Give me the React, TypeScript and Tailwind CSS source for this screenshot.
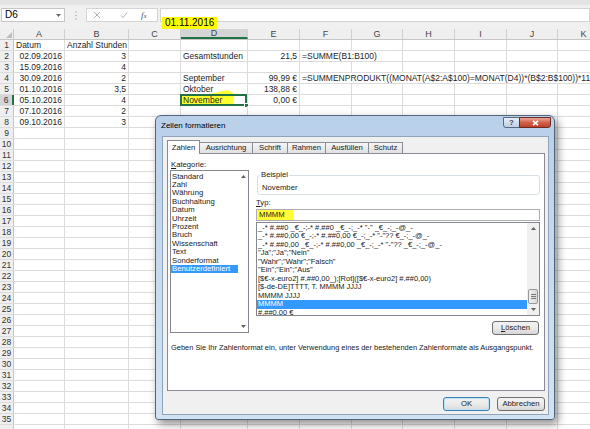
import React from "react";

type Col = { id: string; w: string };
type Val = { text: string; align: "l" | "r"; spill?: boolean };

const COLS: Col[] = [
  { id: "A", w: "w-[51px]" },
  { id: "B", w: "w-[64px]" },
  { id: "C", w: "w-[52px]" },
  { id: "D", w: "w-[67px]" },
  { id: "E", w: "w-[52px]" },
  { id: "F", w: "w-[52px]" },
  { id: "G", w: "w-[51px]" },
  { id: "H", w: "w-[52px]" },
  { id: "I", w: "w-[52px]" },
  { id: "J", w: "w-[51px]" },
  { id: "K", w: "w-[52px]" },
];

const CELLS: Record<string, Val> = {
  A1: { text: "Datum", align: "l" },
  B1: { text: "Anzahl Stunden", align: "l" },
  A2: { text: "02.09.2016", align: "r" },
  B2: { text: "3", align: "r" },
  D2: { text: "Gesamtstunden", align: "l" },
  E2: { text: "21,5", align: "r" },
  F2: { text: "=SUMME(B1:B100)", align: "l", spill: true },
  A3: { text: "15.09.2016", align: "r" },
  B3: { text: "4", align: "r" },
  A4: { text: "30.09.2016", align: "r" },
  B4: { text: "2", align: "r" },
  D4: { text: "September", align: "l" },
  E4: { text: "99,99 €", align: "r" },
  F4: {
    text: "=SUMMENPRODUKT((MONAT(A$2:A$100)=MONAT(D4))*(B$2:B$100))*11,11",
    align: "l",
    spill: true,
  },
  A5: { text: "01.10.2016", align: "r" },
  B5: { text: "3,5", align: "r" },
  D5: { text: "Oktober", align: "l" },
  E5: { text: "138,88 €", align: "r" },
  A6: { text: "05.10.2016", align: "r" },
  B6: { text: "4", align: "r" },
  D6: { text: "November", align: "l" },
  E6: { text: "0,00 €", align: "r" },
  A7: { text: "07.10.2016", align: "r" },
  B7: { text: "2", align: "r" },
  A8: { text: "09.10.2016", align: "r" },
  B8: { text: "3", align: "r" },
};

const CATEGORIES = [
  "Standard",
  "Zahl",
  "Währung",
  "Buchhaltung",
  "Datum",
  "Uhrzeit",
  "Prozent",
  "Bruch",
  "Wissenschaft",
  "Text",
  "Sonderformat",
  "Benutzerdefiniert",
];

const FORMATS = [
  '_-* #.##0 _€_-;-* #.##0 _€_-;_-* "-" _€_-;_-@_-',
  '_-* #.##0,00 €_-;-* #.##0,00 €_-;_-* "-"?? €_-;_-@_-',
  '_-* #.##0,00 _€_-;-* #.##0,00 _€_-;_-* "-"?? _€_-;_-@_-',
  '"Ja";"Ja";"Nein"',
  '"Wahr";"Wahr";"Falsch"',
  '"Ein";"Ein";"Aus"',
  "[$€-x-euro2] #.##0,00_);[Rot]([$€-x-euro2] #.##0,00)",
  "[$-de-DE]TTTT, T. MMMM JJJJ",
  "MMMM JJJJ",
  "MMMM",
  "#.##0,00 €",
];

function Up() {
  return (
    <svg width="5" height="3" viewBox="0 0 5 3">
      <polygon points="2.5,0 5,3 0,3" fill="#606060" />
    </svg>
  );
}

function Down() {
  return (
    <svg width="5" height="3" viewBox="0 0 5 3">
      <polygon points="0,0 5,0 2.5,3" fill="#606060" />
    </svg>
  );
}

function FormulaBar() {
  return (
    <div className="flex h-[24px] items-start bg-[#f0f0f0] pt-[3px]">
      <div className="ml-[1px] flex h-[14px] w-[64px] items-center justify-between border border-[#c6c6c6] bg-white pl-[3px] pr-[3px] text-[10px] leading-[12px]">
        D6
        <svg width="5" height="3" viewBox="0 0 5 3">
          <polygon points="0,0 5,0 2.5,3" fill="#6a6a6a" />
        </svg>
      </div>
      <div className="flex h-[14px] w-[21px] items-center justify-center">
        <svg width="2" height="9" viewBox="0 0 2 9">
          <circle cx="1" cy="1" r="0.8" fill="#b0b0b0" />
          <circle cx="1" cy="4.5" r="0.8" fill="#b0b0b0" />
          <circle cx="1" cy="8" r="0.8" fill="#b0b0b0" />
        </svg>
      </div>
      <div className="flex h-[14px] w-[72px] items-center border border-[#d4d4d4] bg-white">
        <svg className="ml-[6px]" width="8" height="8" viewBox="0 0 8 8">
          <path d="M1 1L7 7M7 1L1 7" stroke="#b0b0b0" strokeWidth="1" />
        </svg>
        <svg className="ml-[19px]" width="8" height="8" viewBox="0 0 8 8">
          <path d="M0.8 4.4L3 6.6L7.2 1.4" stroke="#b0b0b0" strokeWidth="1" fill="none" />
        </svg>
        <span className="ml-[13px] font-['Liberation_Serif',serif] text-[9px] italic leading-[10px] text-[#555]">
          f<span className="text-[7px]">x</span>
        </span>
      </div>
      <div className="ml-[2px] h-[14px] flex-1 border border-[#d4d4d4] bg-white">
        <span className="ml-[1px] inline-block h-full bg-[#ffff00] px-[3px] text-[10px] leading-[12px]">
          01.11.2016
        </span>
      </div>
    </div>
  );
}

function Cell({ col, row }: { col: Col; row: number }) {
  const id = `${col.id}${row}`;
  const v = CELLS[id];
  return (
    <div
      className={`${col.w} relative flex shrink-0 items-center border-r border-[#dcdcdc] ${
        v && v.align === "r" ? "justify-end pr-[2px]" : "pl-[2px]"
      }`}
    >
      {id === "D6" && (
        <>
          <div className="absolute -top-[5px] left-0 -z-10 h-[16px] w-[53px] bg-[#fbff2e] [clip-path:polygon(0_35%,55%_25%,88%_0,100%_25%,97%_100%,0_100%)]" />
          <div className="absolute -left-[1px] -top-[1px] -bottom-[1px] right-0 border-2 border-[#217346]" />
          <div className="absolute -bottom-[3px] -right-[2px] h-[5px] w-[5px] border border-white bg-[#217346]" />
        </>
      )}
      {v && (
        <span className={`whitespace-nowrap ${v.spill ? "relative z-[1] bg-white pr-[2px]" : "relative"}`}>
          {v.text}
        </span>
      )}
    </div>
  );
}

function Sheet() {
  const rows = Array.from({ length: 35 }, (_, i) => i + 1);
  return (
    <div className="text-[8.5px] leading-[10px] text-[#1e1e1e]">
      <div className="flex h-[11px] border-b border-[#c6c6c6] bg-[#efefef] text-[9px] text-[#444]">
        <div className="relative w-[14px] shrink-0 border-r border-[#c6c6c6]">
          <svg className="absolute bottom-[1px] right-[1px]" width="6" height="6" viewBox="0 0 6 6">
            <polygon points="6,0 6,6 0,6" fill="#bdbdbd" />
          </svg>
        </div>
        {COLS.map((c) => (
          <div
            key={c.id}
            className={`${c.w} flex shrink-0 items-center justify-center border-r border-[#d0d0d0] ${
              c.id === "D" ? "border-b-2 border-b-[#217346] bg-[#d5d5d5]" : ""
            }`}
          >
            {c.id}
          </div>
        ))}
      </div>
      {rows.map((r) => (
        <div key={r} className="flex h-[11px] border-b border-[#dcdcdc]">
          <div
            className={`flex w-[14px] shrink-0 items-center justify-center border-r text-[#333] ${
              r === 6 ? "border-r-2 border-r-[#217346] bg-[#d5d5d5]" : "border-[#c6c6c6] bg-[#efefef]"
            }`}
          >
            {r}
          </div>
          {COLS.map((c) => (
            <Cell key={c.id} col={c} row={r} />
          ))}
        </div>
      ))}
      <div className="flex h-[11px]">
        <div className="w-[14px] shrink-0 border-r border-[#c6c6c6] bg-[#efefef]" />
        {COLS.map((c) => (
          <div key={c.id} className={`${c.w} shrink-0 border-r border-[#dcdcdc]`} />
        ))}
      </div>
    </div>
  );
}

function Tabs() {
  const tabs = [
    { label: "Ausrichtung", w: "w-[54px]" },
    { label: "Schrift", w: "w-[36px]" },
    { label: "Rahmen", w: "w-[39px]" },
    { label: "Ausfüllen", w: "w-[44px]" },
    { label: "Schutz", w: "w-[35px]" },
  ];
  return (
    <div className="flex h-[11px] items-end">
      <div className="relative z-10 -mb-[1px] flex h-[14px] w-[33px] items-center justify-center border border-b-0 border-[#898c95] bg-white">
        Zahlen
      </div>
      {tabs.map((t) => (
        <div
          key={t.label}
          className={`${t.w} -ml-[1px] flex h-[11px] items-center justify-center border border-b-0 border-[#898c95] bg-gradient-to-b from-[#f5f5f5] to-[#e0e0e0]`}
        >
          {t.label}
        </div>
      ))}
    </div>
  );
}

function Panel() {
  return (
    <div className="flex h-[238px] flex-col border border-[#898c95] bg-white">
      <div className="flex items-start">
        <div className="ml-[2px] flex w-[79px] flex-col">
          <div className="mt-[7px] h-[8px] pl-[1px]">
            <span className="underline">K</span>ategorie:
          </div>
          <div className="mt-[1px] flex h-[163px] border border-[#828790] bg-white">
            <div className="flex-1 pt-[1.5px] leading-[8.4px]">
              {CATEGORIES.map((c) => (
                <div
                  key={c}
                  className={`pl-[1px] ${c === "Benutzerdefiniert" ? "bg-[#3399ff] text-white" : ""}`}
                >
                  {c}
                </div>
              ))}
            </div>
            <div className="flex w-[10px] flex-col items-center justify-between py-[4px]">
              <Up />
              <Down />
            </div>
          </div>
        </div>
        <div className="ml-[7px] flex w-[284px] flex-col">
          <div className="relative ml-[1px] mt-[21px] h-[20px] rounded-[3px] border border-[#d5dfe5] pl-[4px] pt-[8px]">
            <span className="absolute -top-[5px] left-[2px] bg-white px-[1px]">Beispiel</span>
            November
          </div>
          <div className="mt-[4px] h-[8px]">
            <span className="underline">T</span>yp:
          </div>
          <div className="mt-[2px] h-[12px] border border-[#abadb3] bg-white">
            <span className="inline-block h-full bg-[#ffff33] pl-[2px] pr-[8px] leading-[10px]">MMMM</span>
          </div>
          <div className="mt-[1px] flex h-[94px] border border-[#828790] bg-white text-[7.5px]">
            <div className="flex-1 overflow-hidden pt-[0.5px] leading-[8.5px]">
              {FORMATS.map((f) => (
                <div
                  key={f}
                  className={`whitespace-nowrap pl-[1px] ${f === "MMMM" ? "bg-[#3399ff] text-white" : ""}`}
                >
                  {f}
                </div>
              ))}
            </div>
            <div className="flex w-[12px] flex-col bg-[#f0f0f0]">
              <div className="flex h-[11px] items-center justify-center">
                <Up />
              </div>
              <div className="flex flex-1 flex-col justify-end">
                <div className="mx-[1px] flex h-[15px] flex-col items-center justify-center gap-[1px] rounded-[2px] border border-[#979797] bg-gradient-to-r from-[#f0f0f0] to-[#d9d9d9]">
                  <div className="h-px w-[5px] bg-[#777]" />
                  <div className="h-px w-[5px] bg-[#777]" />
                  <div className="h-px w-[5px] bg-[#777]" />
                </div>
              </div>
              <div className="flex h-[11px] items-center justify-center">
                <Down />
              </div>
            </div>
          </div>
          <button className="mr-[1px] mt-[5px] h-[14px] w-[47px] self-end rounded-[3px] border border-[#707070] bg-gradient-to-b from-[#f2f2f2] via-[#ebebeb] to-[#d6d6d6] text-center leading-[12px]">
            <span className="underline">L</span>öschen
          </button>
        </div>
      </div>
      <div className="mt-[9px] whitespace-nowrap pl-[3px] text-[7.45px]">
        Geben Sie Ihr Zahlenformat ein, unter Verwendung eines der bestehenden Zahlenformate als Ausgangspunkt.
      </div>
    </div>
  );
}

function FormatDialog() {
  return (
    <div className="absolute left-[155px] top-[115px] z-20 flex h-[305px] w-[400px] flex-col rounded-b-[3px] rounded-t-[6px] border border-[#53657b] bg-gradient-to-b from-[#b9d0ea] via-[#c8daef] to-[#d3e2f3] text-[7.7px] leading-[8px] text-[#1a1a1a] shadow-[3px_4px_8px_rgba(0,0,0,0.45)]">
      <div className="relative h-[20px] shrink-0 pl-[5px] pt-[6px] text-[8px] text-black">
        Zellen formatieren
        <div className="absolute right-[3px] top-[1px] flex">
          <div className="flex h-[11px] w-[17px] items-center justify-center rounded-bl-[3px] border border-[#5a6a7e] bg-gradient-to-b from-[#e6eef8] to-[#bfd1e7] text-[8px] font-bold text-[#3a4a5e]">
            ?
          </div>
          <div className="-ml-[1px] flex h-[11px] w-[32px] items-center justify-center rounded-br-[3px] border border-[#6b2a22] bg-gradient-to-b from-[#e9a595] via-[#d2614c] to-[#c0402c]">
            <svg width="7" height="6" viewBox="0 0 7 6">
              <path d="M1 0.8L6 5.2M6 0.8L1 5.2" stroke="white" strokeWidth="1.6" />
            </svg>
          </div>
        </div>
      </div>
      <div className="mb-[4px] ml-[6px] mr-[5px] flex-1 border border-[#8fa3b9] bg-[#f0f0f0] pl-[4px] pr-[3px] pt-[5px]">
        <Tabs />
        <Panel />
        <div className="mt-[6px] flex justify-end gap-[7px]">
          <button className="h-[14px] w-[47px] rounded-[3px] border border-[#3c7fb1] bg-gradient-to-b from-[#f2f2f2] via-[#ebebeb] to-[#d9d9d9] text-center leading-[12px] shadow-[inset_0_0_0_1px_#bfe3f9]">
            OK
          </button>
          <button className="h-[14px] w-[48px] rounded-[3px] border border-[#707070] bg-gradient-to-b from-[#f2f2f2] via-[#ebebeb] to-[#d6d6d6] text-center leading-[12px]">
            Abbrechen
          </button>
        </div>
      </div>
    </div>
  );
}

export default function App() {
  return (
    <div className="relative isolate h-[429px] w-[590px] overflow-hidden bg-white font-['Liberation_Sans',Arial,sans-serif]">
      <div className="h-[5px] bg-[#e3e3e3]" />
      <FormulaBar />
      <Sheet />
      <FormatDialog />
    </div>
  );
}
